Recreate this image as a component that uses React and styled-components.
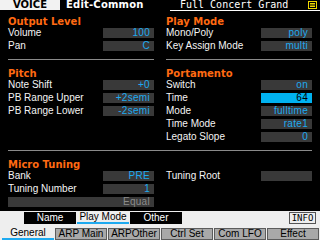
import React from "react";
import styled, { createGlobalStyle } from "styled-components";

const GlobalStyle = createGlobalStyle`
  html, body {
    margin: 0;
    padding: 0;
    background: #000;
  }
`;

const Screen = styled.div`
  width: 320px;
  height: 240px;
  background: #000;
  display: flex;
  flex-direction: column;
  overflow: hidden;
  font-family: "Liberation Sans", Arial, sans-serif;
`;

const TopBar = styled.div`
  display: flex;
  height: 11px;
  flex-shrink: 0;
`;

const ModeTag = styled.div`
  width: 60px;
  height: 10px;
  background: #f2f2f2;
  color: #000;
  font: bold 10px/10px "DejaVu Sans", sans-serif;
  text-align: center;
`;

const PageName = styled.div`
  width: 104px;
  height: 10px;
  padding-left: 6px;
  color: #fff;
  font: bold 10px/10px "DejaVu Sans", sans-serif;
  letter-spacing: 0.2px;
`;

const TitleBar = styled.div`
  flex: 1;
  height: 10px;
  border-bottom: 1px solid #fff;
  display: flex;
  align-items: center;
  justify-content: space-between;
  padding: 0 3px 0 10px;
  color: #fff;
  font: 10px/10px "DejaVu Sans Mono", monospace;
`;

const Band = styled.div`
  display: grid;
  grid-template-columns: 146px 146px;
  column-gap: 12px;
  padding: ${(p) => p.$top}px 8px 0;
  height: ${(p) => p.$h}px;
  box-sizing: border-box;
  flex-shrink: 0;
`;

const Rule = styled.div`
  display: grid;
  grid-template-columns: ${(p) => (p.$split ? "146px 146px" : "1fr")};
  column-gap: 12px;
  padding: 0 8px;
  height: 1px;
  flex-shrink: 0;
`;

const Line = styled.div`
  height: 1px;
  background: #8a8a8a;
`;

const Panel = styled.div`
  display: flex;
  flex-direction: column;
`;

const SectionTitle = styled.div`
  height: 13px;
  color: #ff6a12;
  font: bold 10px/13px "DejaVu Sans", sans-serif;
`;

const Row = styled.div`
  display: flex;
  align-items: flex-start;
  height: 13px;
`;

const Label = styled.div`
  flex: 1;
  color: #f4f4f4;
  font-size: 10px;
  line-height: 10px;
  white-space: nowrap;
`;

const Value = styled.div`
  width: ${(p) => (p.$wide ? "146px" : "51px")};
  height: 10px;
  box-sizing: border-box;
  padding-right: 4px;
  background: ${(p) => (p.$active ? "#00b2f0" : "#393939")};
  color: ${(p) => (p.$active ? "#000" : p.$muted ? "#8c8c8c" : "#1eaaf0")};
  font-size: 10px;
  line-height: 10px;
  text-align: right;
  letter-spacing: 0.3px;
`;

const Footer = styled.div`
  flex: 1;
  background: #eeeeee;
  display: flex;
  flex-direction: column;
`;

const SubTabs = styled.div`
  display: flex;
  gap: 1px;
  height: 15px;
  padding: 1px 4px 0 24px;
  box-sizing: border-box;
`;

const SubTab = styled.div`
  width: 52px;
  height: 12px;
  box-sizing: border-box;
  background: ${(p) => (p.$active ? "transparent" : "#000")};
  color: ${(p) => (p.$active ? "#000" : "#fff")};
  border-bottom: ${(p) => (p.$active ? "2px solid #1eaaf0" : "none")};
  font-size: 10px;
  line-height: ${(p) => (p.$active ? "10px" : "12px")};
  text-align: center;
`;

const InfoButton = styled.div`
  margin-left: auto;
  width: 27px;
  height: 12px;
  box-sizing: border-box;
  border: 1px solid #555;
  color: #000;
  font: 9px/10px "DejaVu Sans Mono", monospace;
  text-align: center;
`;

const MainTabs = styled.div`
  display: flex;
  gap: 1px;
  padding: 2px 0 0 2px;
  height: 14px;
  box-sizing: border-box;
`;

const MainTab = styled.div`
  width: 52px;
  height: 12px;
  box-sizing: border-box;
  background: ${(p) => (p.$active ? "transparent" : "#a9a9a9")};
  border: ${(p) => (p.$active ? "none" : "1px solid #5c5c5c")};
  border-bottom: ${(p) =>
    p.$active ? "2px solid #1eaaf0" : "1px solid #5c5c5c"};
  color: #000;
  font-size: 10px;
  line-height: ${(p) => (p.$active ? "10px" : "10px")};
  text-align: center;
`;

const ListIcon = () => (
  <svg width="9" height="8" viewBox="0 0 9 8">
    <rect x="0.5" y="0.5" width="8" height="7" fill="none" stroke="#f0d800" />
    <path d="M2 2.5H7M2 4H7M2 5.5H7" stroke="#f0d800" />
  </svg>
);

const Field = ({ label, value, active }) => (
  <Row>
    <Label>{label}</Label>
    <Value $active={active}>{value}</Value>
  </Row>
);

export default function App() {
  return (
    <>
      <GlobalStyle />
      <Screen>
        <TopBar>
          <ModeTag>VOICE</ModeTag>
          <PageName>Edit-Common</PageName>
          <TitleBar>
            <span>Full Concert Grand</span>
            <ListIcon />
          </TitleBar>
        </TopBar>

        <Band $top={4} $h={48}>
          <Panel>
            <SectionTitle>Output Level</SectionTitle>
            <Field label="Volume" value="100" />
            <Field label="Pan" value="C" />
          </Panel>
          <Panel>
            <SectionTitle>Play Mode</SectionTitle>
            <Field label="Mono/Poly" value="poly" />
            <Field label="Key Assign Mode" value="multi" />
          </Panel>
        </Band>
        <Rule $split>
          <Line />
          <Line />
        </Rule>

        <Band $top={7} $h={90}>
          <Panel>
            <SectionTitle>Pitch</SectionTitle>
            <Field label="Note Shift" value="+0" />
            <Field label="PB Range Upper" value="+2semi" />
            <Field label="PB Range Lower" value="-2semi" />
          </Panel>
          <Panel>
            <SectionTitle>Portamento</SectionTitle>
            <Field label="Switch" value="on" />
            <Field label="Time" value="64" active />
            <Field label="Mode" value="fulltime" />
            <Field label="Time Mode" value="rate1" />
            <Field label="Legato Slope" value="0" />
          </Panel>
        </Band>
        <Rule>
          <Line />
        </Rule>

        <Band $top={7} $h={60}>
          <Panel>
            <SectionTitle>Micro Tuning</SectionTitle>
            <Field label="Bank" value="PRE" />
            <Field label="Tuning Number" value="1" />
            <Row>
              <Value $wide $muted>
                Equal
              </Value>
            </Row>
          </Panel>
          <Panel>
            <SectionTitle />
            <Field label="Tuning Root" value="" />
          </Panel>
        </Band>

        <Footer>
          <SubTabs>
            <SubTab>Name</SubTab>
            <SubTab $active>Play Mode</SubTab>
            <SubTab>Other</SubTab>
            <InfoButton>INFO</InfoButton>
          </SubTabs>
          <MainTabs>
            <MainTab $active>General</MainTab>
            <MainTab>ARP Main</MainTab>
            <MainTab>ARPOther</MainTab>
            <MainTab>Ctrl Set</MainTab>
            <MainTab>Com LFO</MainTab>
            <MainTab>Effect</MainTab>
          </MainTabs>
        </Footer>
      </Screen>
    </>
  );
}
